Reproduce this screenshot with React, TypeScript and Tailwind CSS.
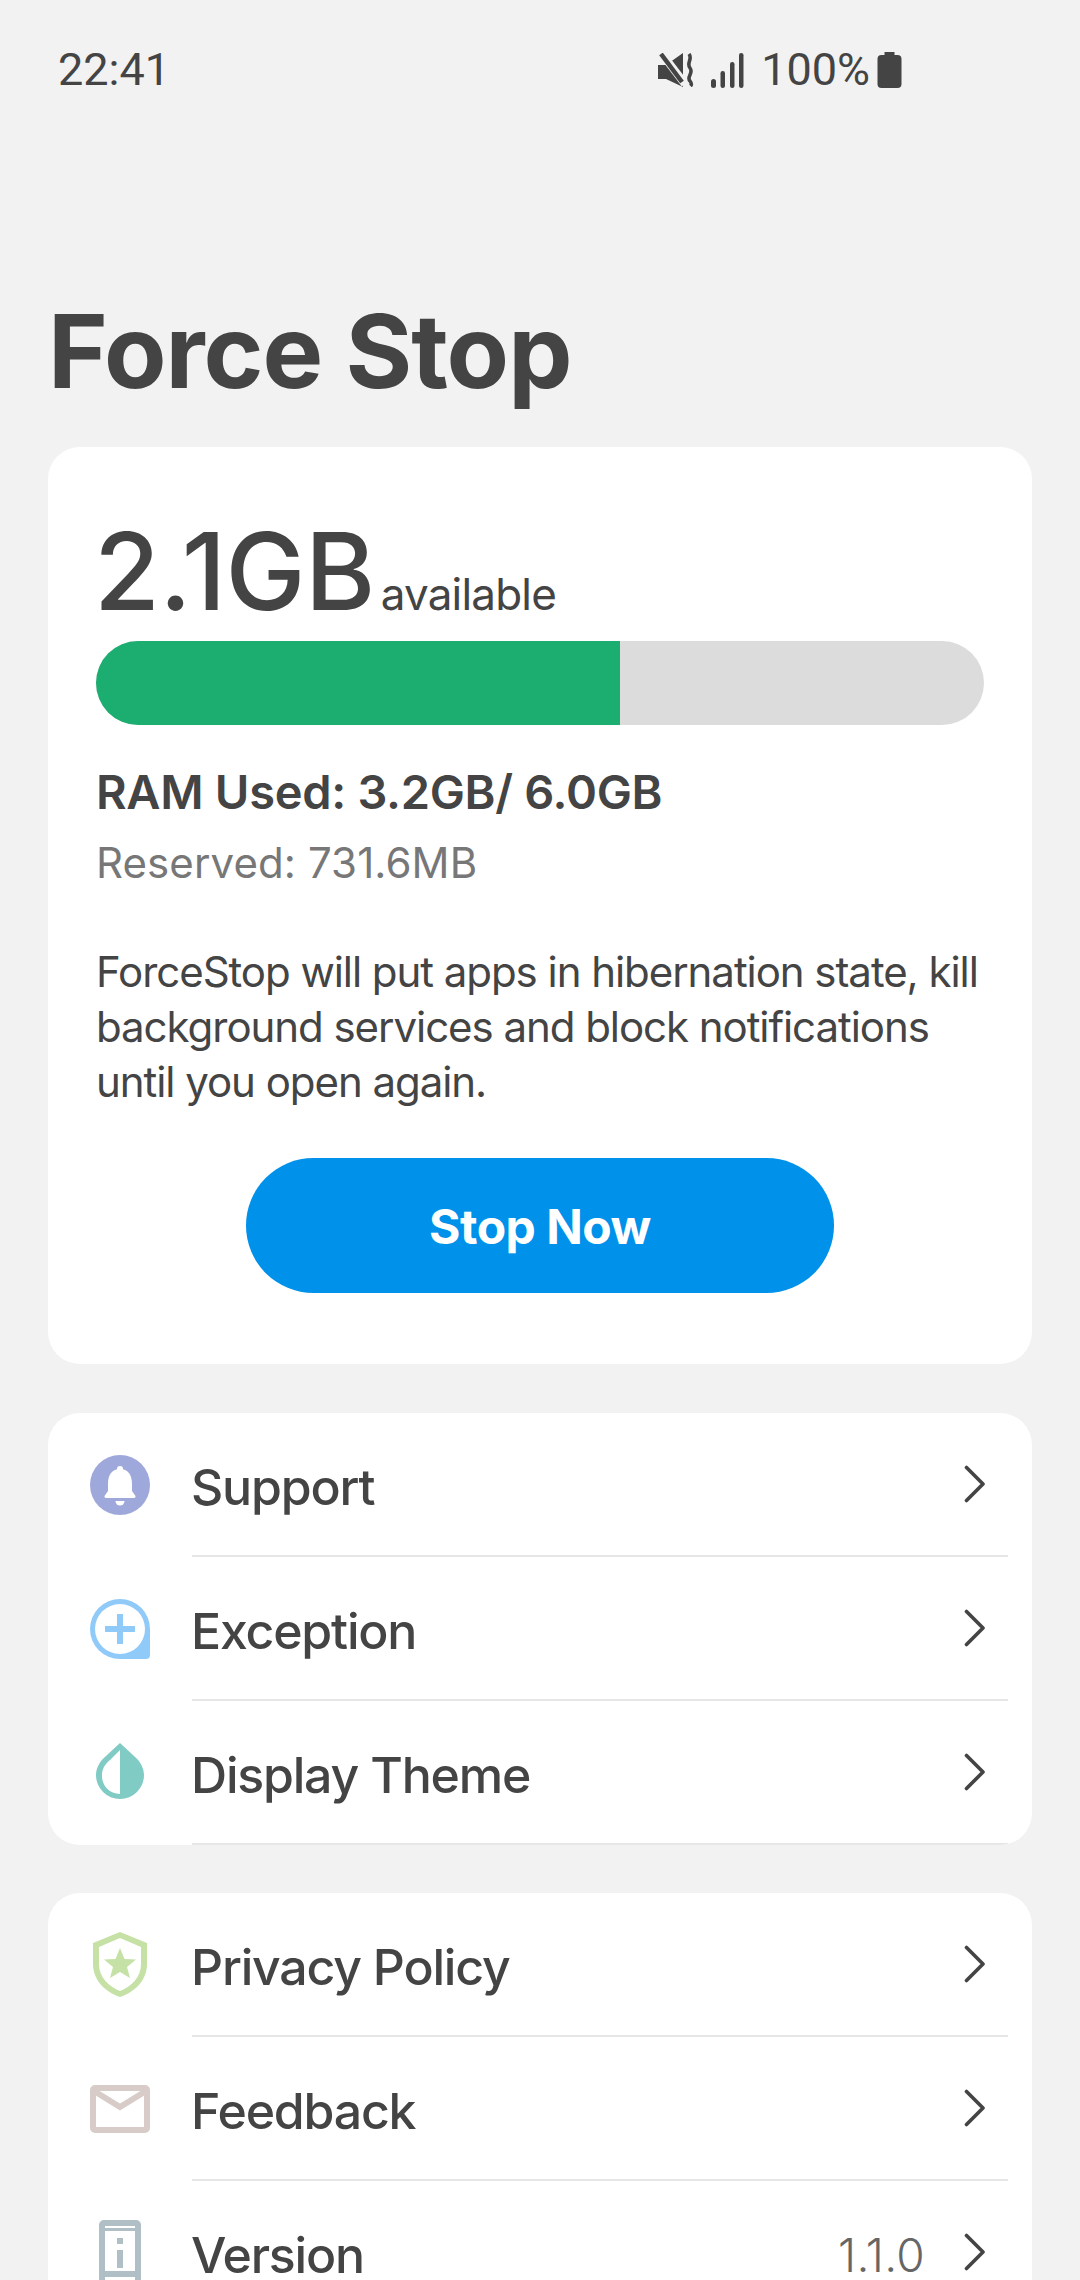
import React from "react";

const Chevron = () => (
  <svg width="22" height="38" viewBox="0 0 22 38" fill="none" className="shrink-0">
    <path d="M2.5 2.5 L19 19 L2.5 35.5" stroke="#444444" strokeWidth="3.6" strokeLinecap="round" strokeLinejoin="round" />
  </svg>
);

const Bell = () => (
  <svg width="60" height="60" viewBox="0 0 60 60">
    <circle cx="30" cy="30" r="30" fill="#9fa8da" />
    <circle cx="30" cy="14" r="3" fill="#fff" />
    <path d="M30 14 C21 14 18 21 18 29 L18 36 L14.5 41 Q14 43 16 43 L44 43 Q46 43 45.5 41 L42 36 L42 29 C42 21 39 14 30 14 Z" fill="#fff" />
    <path d="M25.5 46 L34.5 46 A4.5 4.5 0 0 1 25.5 46 Z" fill="#fff" />
  </svg>
);

const Plus = () => (
  <svg width="60" height="60" viewBox="0 0 60 60">
    <path d="M30 0 A30 30 0 0 1 60 30 L60 56 Q60 60 56 60 L30 60 A30 30 0 0 1 30 0 Z" fill="#90caf9" />
    <circle cx="30" cy="30" r="25" fill="#fff" />
    <rect x="15" y="27" width="30" height="6" fill="#90caf9" />
    <rect x="27" y="15" width="6" height="30" fill="#90caf9" />
  </svg>
);

const Drop = () => (
  <svg width="60" height="60" viewBox="0 0 60 60">
    <path d="M30 0 L44 13 C50 18 54 25 54 32 A24 24 0 0 1 6 32 C6 25 10 18 16 13 Z" fill="#80cbc4" />
    <path d="M30 7 L30 51 A18 18 0 0 1 12 32 C12 26 15 21 20 17 Z" fill="#fff" />
  </svg>
);

const Shield = () => (
  <svg width="60" height="66" viewBox="0 0 60 66">
    <path d="M30 0 L57 11 L57 32 C57 48 45 60 30 65 C15 60 3 48 3 32 L3 11 Z" fill="#c5e1a5" />
    <path d="M30 6 L51 15 L51 32 C51 45 42 54 30 59 C18 54 9 45 9 32 L9 15 Z" fill="#fff" />
    <path d="M30 16 L34.5 27 L46 27.5 L37 35 L40 46 L30 40 L20 46 L23 35 L14 27.5 L25.5 27 Z" fill="#c5e1a5" />
  </svg>
);

const Mail = () => (
  <svg width="60" height="48" viewBox="0 0 60 48">
    <rect x="3" y="3" width="54" height="42" rx="2" fill="none" stroke="#d7ccc8" strokeWidth="6" />
    <path d="M4 6 L30 22 L56 6" fill="none" stroke="#d7ccc8" strokeWidth="6" />
  </svg>
);

const Info = () => (
  <svg width="42" height="66" viewBox="0 0 42 66">
    <rect x="3" y="3" width="36" height="60" rx="2" fill="none" stroke="#b0bec5" strokeWidth="6" />
    <rect x="3" y="8" width="36" height="3" fill="#b0bec5" />
    <rect x="3" y="51" width="36" height="6" fill="#b0bec5" />
    <rect x="18" y="18" width="6" height="6" fill="#b0bec5" />
    <rect x="18" y="30" width="6" height="18" fill="#b0bec5" />
  </svg>
);

type RowProps = { icon: React.ReactNode; label: string; value?: string };

const Row = ({ icon, label, value }: RowProps) => (
  <div className="flex items-stretch h-[144px] pr-[24px]">
    <div className="w-[144px] shrink-0 flex items-center justify-center">
      <div className="w-[60px] flex justify-center">{icon}</div>
    </div>
    <div className="flex-1 flex items-center border-b-2 border-[#e6e6e6] pr-[22px]">
      <span className="flex-1 text-[50px] leading-[64px] pt-[6px] -ml-[1px] text-[#444444] font-[450] tracking-[-1.2px]">{label}</span>
      {value && <span className="text-[46px] leading-[56px] pt-[6px] font-light text-[#666666] mr-[39px] tracking-[0.3px]">{value}</span>}
      <Chevron />
    </div>
  </div>
);

export default function App() {
  return (
    <div className="w-[1080px] h-[2280px] overflow-hidden bg-[#f2f2f2] font-['Inter',sans-serif] text-[#444444]">
      <div className="h-[140px] pl-[58px] pr-[178px] pt-[48px] flex items-start justify-between font-['Roboto',sans-serif] text-[#444444]">
        <span className="text-[45px] leading-[44px]">22:41</span>
        <div className="flex items-center">
          <svg width="36" height="34" viewBox="0 0 36 34" className="mr-[17px]">
            <path d="M0 12 H8 L25 0 V34 L8 26 H0 Z" fill="#444" />
            <path d="M1 -3 L27 31" stroke="#f2f2f2" strokeWidth="8" />
            <path d="M3 1 L24 29" stroke="#444" strokeWidth="4.5" />
            <path d="M31 1 C35 6 28 10 32 15 C36 20 28 24 32 28 C33.5 30 33.5 32 32.5 33" fill="none" stroke="#444" strokeWidth="3.6" />
          </svg>
          <svg width="33" height="35" viewBox="0 0 33 35" className="mr-[17px]">
            <rect x="0" y="26" width="5" height="9" rx="2.5" fill="#444" />
            <rect x="9.5" y="18" width="4.5" height="17" rx="2.2" fill="#444" />
            <rect x="19" y="9" width="4.5" height="26" rx="2.2" fill="#444" />
            <rect x="28" y="0" width="4.5" height="35" rx="2.2" fill="#444" />
          </svg>
          <span className="text-[45px] leading-[44px]">100%</span>
          <svg width="25" height="36" viewBox="0 0 24 36" className="ml-[7px]">
            <path d="M7 0 H17 V3 H20 Q24 3 24 7 V32 Q24 36 20 36 H4 Q0 36 0 32 V7 Q0 3 4 3 H7 Z" fill="#444" />
          </svg>
        </div>
      </div>
      <h1 className="mt-[160px] ml-[48px] text-[102px] leading-[102px] font-bold text-[#444444] tracking-[-1px]">Force Stop</h1>
      <div className="mt-[45px] mx-[48px] h-[917px] bg-white rounded-[32px] px-[48px] pt-[84px]">
        <div className="flex items-baseline h-[80px]">
          <span className="text-[107px] leading-[80px] -ml-[2px] font-[450] tracking-[-0.6px]">2.1GB</span>
          <span className="ml-[6px] text-[44px] leading-[80px] tracking-[-0.8px]">available</span>
        </div>
        <div className="mt-[30px] h-[84px] rounded-full bg-[#dcdcdc] overflow-hidden">
          <div className="h-full w-[524px] bg-[#1bae70]" />
        </div>
        <div className="mt-[39px] text-[47px] leading-[56px] font-semibold tracking-[-0.3px]">RAM Used: 3.2GB/ 6.0GB</div>
        <div className="mt-[15px] text-[42px] leading-[56px] text-[#777777] tracking-[0.1px]">Reserved: 731.6MB</div>
        <p className="mt-[53px] text-[42px] leading-[55px] tracking-[-1.05px]">
          ForceStop will put apps in hibernation state, kill background services and block notifications until you open again.
        </p>
        <div className="mt-[49px] flex justify-center">
          <div className="w-[588px] h-[135px] pt-[2px] rounded-full bg-[#0091ea] flex items-center justify-center text-white text-[48px] font-bold tracking-[-0.5px]">
            Stop Now
          </div>
        </div>
      </div>
      <div className="mt-[49px] mx-[48px] bg-white rounded-[32px] overflow-hidden">
        <Row icon={<Bell />} label="Support" />
        <Row icon={<Plus />} label="Exception" />
        <Row icon={<Drop />} label="Display Theme" />
      </div>
      <div className="mt-[48px] mx-[48px] bg-white rounded-[32px] overflow-hidden">
        <Row icon={<Shield />} label="Privacy Policy" />
        <Row icon={<Mail />} label="Feedback" />
        <Row icon={<Info />} label="Version" value="1.1.0" />
      </div>
    </div>
  );
}
